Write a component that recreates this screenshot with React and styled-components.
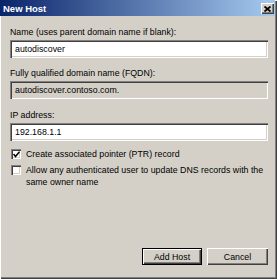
import React from "react";
import styled, { createGlobalStyle } from "styled-components";

const Global = createGlobalStyle`
  html, body { margin: 0; padding: 0; background: #ffffff; }
  body { font-family: "Liberation Sans", Arial, sans-serif; font-size: 8.8px; color: #000; }
  * { box-sizing: border-box; }
`;

const Window = styled.div`
  width: 277px;
  height: 279px;
  background: #d4d0c8;
  display: flex;
  flex-direction: column;
  box-shadow: inset 1px 1px #ffffff, inset -1px -1px #404040, inset -2px -2px #808080;
  padding: 0 2px 2px 0;
`;

const TitleBar = styled.div`
  height: 16px;
  background: linear-gradient(to right, #0a246a, #a6caf0);
  display: flex;
  align-items: center;
  justify-content: space-between;
  padding: 0 1px 0 3px;
`;

const Title = styled.span`
  color: #ffffff;
  font-weight: bold;
  font-size: 9.5px;
`;

const CloseButton = styled.div`
  width: 13px;
  height: 11px;
  background: #d4d0c8;
  box-shadow: inset 1px 1px #ffffff, inset -1px -1px #404040, inset -2px -2px #808080;
  display: flex;
  align-items: center;
  justify-content: center;
  margin-top: 1px;
`;

const Content = styled.div`
  flex: 1;
  display: flex;
  flex-direction: column;
  padding: 11px 7px 12px 10px;
`;

const Label = styled.div`
  line-height: 11px;
  height: 11px;
  margin-top: ${(p) => p.$gap || 0}px;
  white-space: nowrap;
`;

const Field = styled.div`
  height: 18px;
  margin-top: 2px;
  background: ${(p) => (p.$disabled ? "#d4d0c8" : "#ffffff")};
  box-shadow: inset 1px 1px #808080, inset 2px 2px #404040, inset -1px -1px #ffffff, inset -2px -2px #d4d0c8;
  padding: 0 5px;
  display: flex;
  align-items: center;
  white-space: nowrap;
`;

const CheckRow = styled.div`
  display: flex;
  align-items: flex-start;
  gap: 5px;
  margin-top: ${(p) => p.$gap}px;
  padding-left: 1px;
`;

const Box = styled.div`
  width: 10px;
  height: 10px;
  flex: none;
  margin-top: 1px;
  background: #ffffff;
  box-shadow: inset 1px 1px #808080, inset 2px 2px #404040, inset -1px -1px #ffffff, inset -2px -2px #d4d0c8;
  display: flex;
  align-items: center;
  justify-content: center;
`;

const CheckText = styled.div`
  line-height: 12.5px;
  flex: 1;
`;

const Buttons = styled.div`
  margin-top: auto;
  display: flex;
  justify-content: flex-end;
  gap: 5px;
`;

const Button = styled.div`
  width: ${(p) => p.$w}px;
  height: 17px;
  display: flex;
  align-items: center;
  justify-content: center;
  background: #d4d0c8;
  box-shadow: ${(p) =>
    p.$default
      ? "inset 0 0 0 1px #000000, inset 2px 2px #ffffff, inset -2px -2px #404040, inset -3px -3px #808080"
      : "inset 1px 1px #ffffff, inset -1px -1px #404040, inset -2px -2px #808080"};
`;

export default function App() {
  return (
    <>
      <Global />
      <Window>
        <TitleBar>
          <Title>New Host</Title>
          <CloseButton>
            <svg width="7" height="6" viewBox="0 0 7 6">
              <path d="M0.5 0.5 L6.5 5.5 M6.5 0.5 L0.5 5.5" stroke="#000" strokeWidth="1.8" />
            </svg>
          </CloseButton>
        </TitleBar>
        <Content>
          <Label>Name (uses parent domain name if blank):</Label>
          <Field>autodiscover</Field>
          <Label $gap={10}>Fully qualified domain name (FQDN):</Label>
          <Field $disabled>autodiscover.contoso.com.</Field>
          <Label $gap={11}>IP address:</Label>
          <Field>192.168.1.1</Field>
          <CheckRow $gap={7}>
            <Box>
              <svg width="7" height="7" viewBox="0 0 7 7">
                <path d="M0.5 3 L2.5 5.5 L6.5 0.8" stroke="#000" strokeWidth="1.5" fill="none" />
              </svg>
            </Box>
            <CheckText>Create associated pointer (PTR) record</CheckText>
          </CheckRow>
          <CheckRow $gap={3}>
            <Box />
            <CheckText>Allow any authenticated user to update DNS records with the same owner name</CheckText>
          </CheckRow>
          <Buttons>
            <Button $default $w={60}>Add Host</Button>
            <Button $w={61}>Cancel</Button>
          </Buttons>
        </Content>
      </Window>
    </>
  );
}
